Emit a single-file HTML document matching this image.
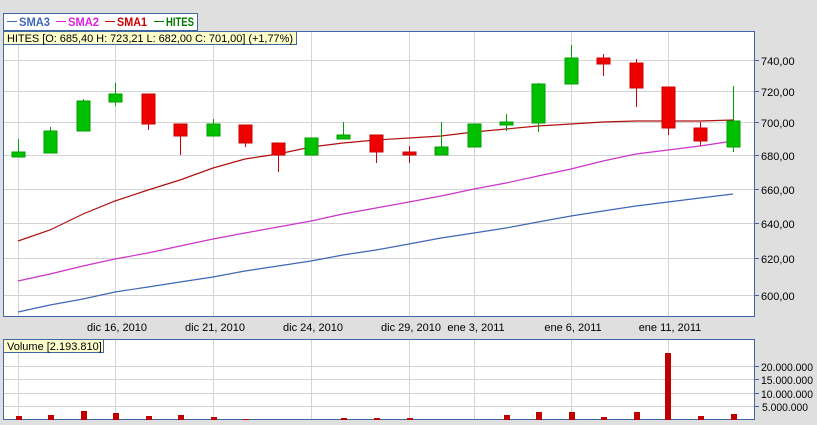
<!DOCTYPE html>
<html><head><meta charset="utf-8"><style>
html,body{margin:0;padding:0;background:#dedfde;}
svg{display:block;font-family:"Liberation Sans",Arial,sans-serif;}
</style></head><body>
<svg width="817" height="425" viewBox="0 0 817 425" xmlns="http://www.w3.org/2000/svg">
<rect width="817" height="425" fill="#dedfde"/>
<rect x="3.5" y="31.5" width="751" height="285" fill="#fff" stroke="#3f67a6"/>
<g stroke="#d4d4d4" stroke-width="1">
<line x1="4" y1="60.5" x2="754" y2="60.5"/><line x1="4" y1="91.5" x2="754" y2="91.5"/>
<line x1="4" y1="122.5" x2="754" y2="122.5"/><line x1="4" y1="155.5" x2="754" y2="155.5"/>
<line x1="4" y1="189.5" x2="754" y2="189.5"/><line x1="4" y1="223.5" x2="754" y2="223.5"/>
<line x1="4" y1="258.5" x2="754" y2="258.5"/><line x1="4" y1="295.5" x2="754" y2="295.5"/>
<line x1="18.5" y1="32" x2="18.5" y2="316"/><line x1="115.5" y1="32" x2="115.5" y2="316"/>
<line x1="213.5" y1="32" x2="213.5" y2="316"/><line x1="311.5" y1="32" x2="311.5" y2="316"/>
<line x1="409.5" y1="32" x2="409.5" y2="316"/><line x1="474.5" y1="32" x2="474.5" y2="316"/>
<line x1="571.5" y1="32" x2="571.5" y2="316"/><line x1="668.5" y1="32" x2="668.5" y2="316"/>
</g>
<polyline fill="none" stroke="#3f67b6" stroke-width="1.2" points="18,312 50,305 83,299 115,292 148,287 180,282 213,277 245,271 278,266 311,261 343,255 376,250 409,244 441,238 474,233 506,228 538,222 571,216 603,211 636,206 668,202 700,198 733,194"/>
<polyline fill="none" stroke="#cc33cc" stroke-width="1.2" points="18,281 50,274 83,266 115,259 148,253 180,246 213,239 245,233 278,227 311,221 343,214 376,208 409,202 441,196 474,189 506,183 538,176 571,169 603,161 636,154 668,150 700,146 733,141"/>
<polyline fill="none" stroke="#b01010" stroke-width="1.2" points="18,241 50,230 83,214 115,201 148,190 180,180 213,168 245,159 278,154 311,147 343,143 376,140 409,138 441,136 474,132 506,129 538,126 571,124 603,122 636,121 668,121 700,121 733,120"/>
<g stroke-width="1">
<g fill="#00c000" stroke="#00a000">
<line x1="18.5" y1="139" x2="18.5" y2="157"/><rect x="12" y="152" width="13" height="5"/>
<line x1="50.5" y1="127" x2="50.5" y2="153"/><rect x="44" y="131" width="13" height="22"/>
<line x1="83.5" y1="99" x2="83.5" y2="131"/><rect x="77" y="101" width="13" height="30"/>
<line x1="115.5" y1="83" x2="115.5" y2="106"/><rect x="109" y="94" width="13" height="8"/>
<line x1="213.5" y1="119" x2="213.5" y2="136"/><rect x="207" y="124" width="13" height="12"/>
<line x1="311.5" y1="138" x2="311.5" y2="155"/><rect x="305" y="138" width="13" height="17"/>
<line x1="343.5" y1="122" x2="343.5" y2="139"/><rect x="337" y="135" width="13" height="4"/>
<line x1="441.5" y1="122" x2="441.5" y2="155"/><rect x="435" y="147" width="13" height="8"/>
<line x1="474.5" y1="124" x2="474.5" y2="147"/><rect x="468" y="124" width="13" height="23"/>
<line x1="506.5" y1="114" x2="506.5" y2="131"/><rect x="500" y="122" width="13" height="3"/>
<line x1="538.5" y1="83" x2="538.5" y2="132"/><rect x="532" y="84" width="13" height="39"/>
<line x1="571.5" y1="45" x2="571.5" y2="84"/><rect x="565" y="58" width="13" height="26"/>
<line x1="733.5" y1="86" x2="733.5" y2="152"/><rect x="727" y="121" width="13" height="26"/>
</g>
<g fill="#ee0000" stroke="#cc0000">
<line x1="148.5" y1="94" x2="148.5" y2="130"/><rect x="142" y="94" width="13" height="30"/>
<line x1="180.5" y1="124" x2="180.5" y2="155"/><rect x="174" y="124" width="13" height="12"/>
<line x1="245.5" y1="125" x2="245.5" y2="147"/><rect x="239" y="125" width="13" height="18"/>
<line x1="278.5" y1="143" x2="278.5" y2="172"/><rect x="272" y="143" width="13" height="12"/>
<line x1="376.5" y1="135" x2="376.5" y2="163"/><rect x="370" y="135" width="13" height="17"/>
<line x1="409.5" y1="146" x2="409.5" y2="163"/><rect x="403" y="152" width="13" height="3"/>
<line x1="603.5" y1="54" x2="603.5" y2="76"/><rect x="597" y="58" width="13" height="6"/>
<line x1="636.5" y1="59" x2="636.5" y2="107"/><rect x="630" y="63" width="13" height="25"/>
<line x1="668.5" y1="87" x2="668.5" y2="135"/><rect x="662" y="87" width="13" height="41"/>
<line x1="700.5" y1="122" x2="700.5" y2="146"/><rect x="694" y="128" width="13" height="13"/>
</g>
</g>
<g font-size="11" fill="#000">
<g stroke="#3f67a6"><line x1="755" y1="60.5" x2="759" y2="60.5"/><line x1="755" y1="91.5" x2="759" y2="91.5"/><line x1="755" y1="122.5" x2="759" y2="122.5"/><line x1="755" y1="155.5" x2="759" y2="155.5"/><line x1="755" y1="189.5" x2="759" y2="189.5"/><line x1="755" y1="223.5" x2="759" y2="223.5"/><line x1="755" y1="258.5" x2="759" y2="258.5"/><line x1="755" y1="295.5" x2="759" y2="295.5"/></g>
<text x="761" y="65">740,00</text><text x="761" y="96">720,00</text><text x="761" y="127">700,00</text><text x="761" y="160">680,00</text><text x="761" y="194">660,00</text><text x="761" y="228">640,00</text><text x="761" y="263">620,00</text><text x="761" y="300">600,00</text>
</g>
<g font-size="11" fill="#000" text-anchor="middle">
<text x="117" y="331">dic 16, 2010</text><text x="215" y="331">dic 21, 2010</text><text x="313" y="331">dic 24, 2010</text><text x="411" y="331">dic 29, 2010</text><text x="476" y="331">ene 3, 2011</text><text x="573" y="331">ene 6, 2011</text><text x="670" y="331">ene 11, 2011</text>
</g>
<rect x="3.5" y="13.5" width="194" height="17" fill="#fff" stroke="#3f67a6"/>
<g font-size="11.5" font-weight="bold">
<line x1="7" y1="21.5" x2="17" y2="21.5" stroke="#3f67b6"/><text x="19" y="26" fill="#3f67b6" textLength="31" lengthAdjust="spacingAndGlyphs">SMA3</text>
<line x1="56" y1="21.5" x2="66" y2="21.5" stroke="#dd22dd"/><text x="68" y="26" fill="#dd22dd" textLength="31" lengthAdjust="spacingAndGlyphs">SMA2</text>
<line x1="105" y1="21.5" x2="115" y2="21.5" stroke="#cc0000"/><text x="117" y="26" fill="#cc0000" textLength="30" lengthAdjust="spacingAndGlyphs">SMA1</text>
<line x1="154" y1="21.5" x2="164" y2="21.5" stroke="#007700"/><text x="166" y="26" fill="#007700" textLength="28" lengthAdjust="spacingAndGlyphs">HITES</text>
</g>
<rect x="3.5" y="31.5" width="293" height="13" fill="#ffffcc" stroke="#3f67a6"/>
<text x="7" y="42" font-size="11" fill="#000" textLength="286" lengthAdjust="spacing">HITES [O: 685,40  H: 723,21  L: 682,00  C: 701,00] (+1,77%)</text>
<rect x="3.5" y="339.5" width="751" height="80" fill="#fff" stroke="#3f67a6"/>
<g stroke="#d4d4d4">
<line x1="4" y1="366.5" x2="754" y2="366.5"/><line x1="4" y1="379.5" x2="754" y2="379.5"/><line x1="4" y1="393.5" x2="754" y2="393.5"/><line x1="4" y1="406.5" x2="754" y2="406.5"/>
<line x1="18.5" y1="340" x2="18.5" y2="419"/><line x1="115.5" y1="340" x2="115.5" y2="419"/><line x1="213.5" y1="340" x2="213.5" y2="419"/><line x1="311.5" y1="340" x2="311.5" y2="419"/><line x1="409.5" y1="340" x2="409.5" y2="419"/><line x1="474.5" y1="340" x2="474.5" y2="419"/><line x1="571.5" y1="340" x2="571.5" y2="419"/><line x1="668.5" y1="340" x2="668.5" y2="419"/>
</g>
<g fill="#c00000">
<rect x="16" y="416" width="6" height="4"/><rect x="48" y="415" width="6" height="5"/><rect x="81" y="411" width="6" height="9"/><rect x="113" y="413" width="6" height="7"/><rect x="146" y="416" width="6" height="4"/><rect x="178" y="415" width="6" height="5"/><rect x="211" y="417" width="6" height="3"/><rect x="243" y="419" width="6" height="1"/><rect x="341" y="418" width="6" height="2"/><rect x="374" y="418" width="6" height="2"/><rect x="407" y="418" width="6" height="2"/><rect x="504" y="415" width="6" height="5"/><rect x="536" y="412" width="6" height="8"/><rect x="569" y="412" width="6" height="8"/><rect x="601" y="417" width="6" height="3"/><rect x="634" y="412" width="6" height="8"/><rect x="665" y="353" width="6" height="67"/><rect x="698" y="416" width="6" height="4"/><rect x="731" y="414" width="6" height="6"/>
</g>
<g stroke="#3f67a6"><line x1="755" y1="366.5" x2="759" y2="366.5"/><line x1="755" y1="379.5" x2="759" y2="379.5"/><line x1="755" y1="393.5" x2="759" y2="393.5"/><line x1="755" y1="406.5" x2="759" y2="406.5"/></g>
<g font-size="11" fill="#000"><text x="761" y="371" textLength="52" lengthAdjust="spacingAndGlyphs">20.000.000</text><text x="761" y="384" textLength="52" lengthAdjust="spacingAndGlyphs">15.000.000</text><text x="761" y="398" textLength="52" lengthAdjust="spacingAndGlyphs">10.000.000</text><text x="762" y="411" textLength="46" lengthAdjust="spacingAndGlyphs">5.000.000</text></g>
<rect x="3.5" y="339.5" width="100" height="13" fill="#ffffcc" stroke="#3f67a6"/>
<text x="7" y="350" font-size="11" fill="#000">Volume [2.193.810]</text>
</svg>
</body></html>
